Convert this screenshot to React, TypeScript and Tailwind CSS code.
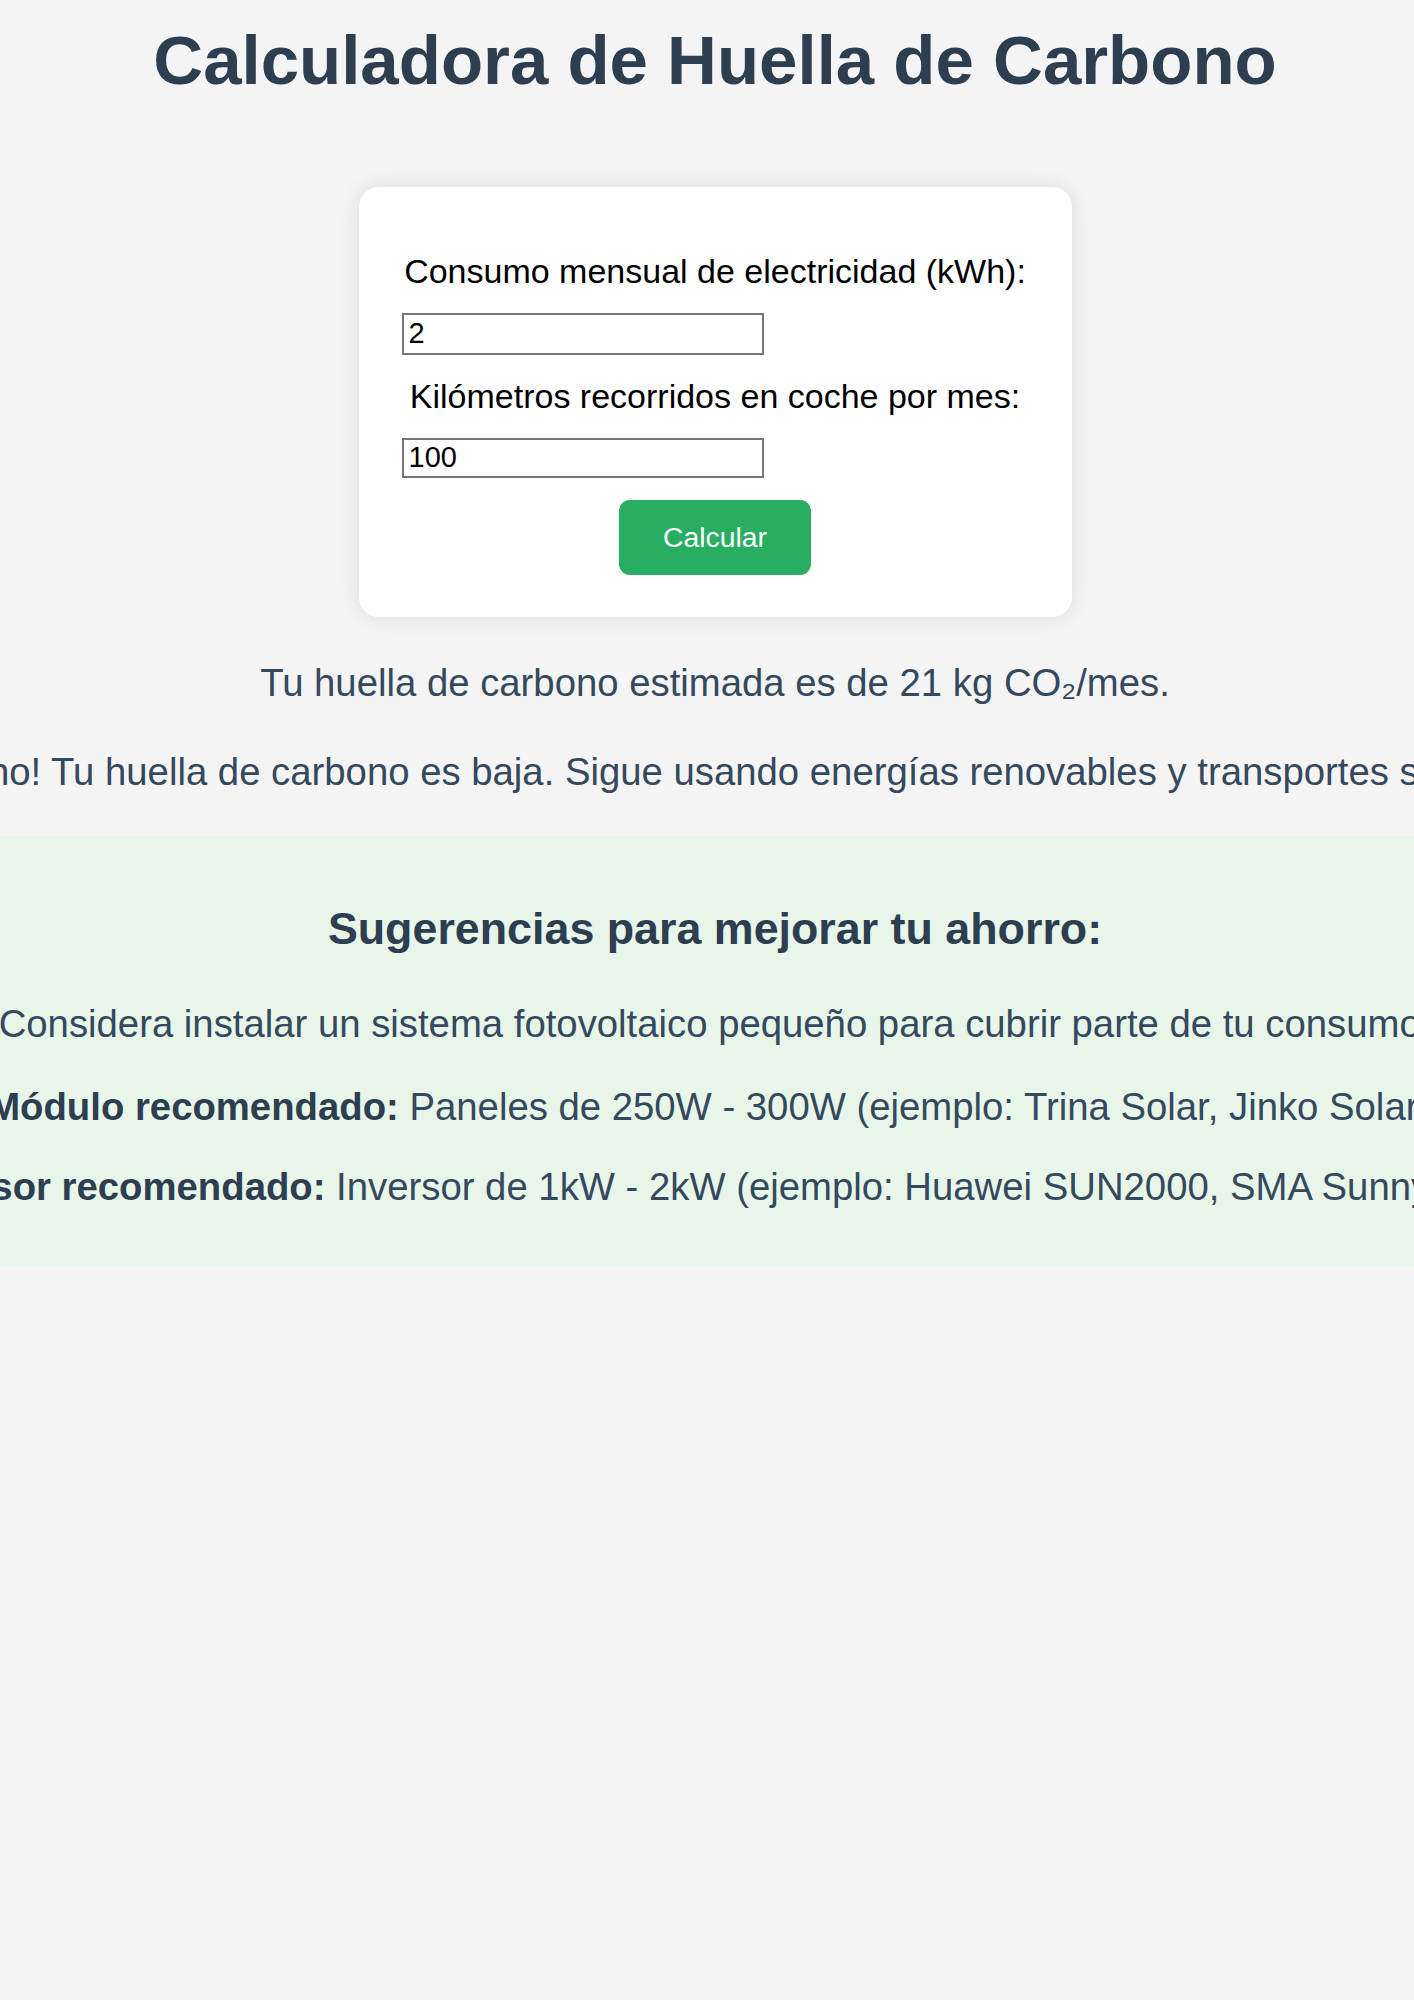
import { useState } from "react";

export default function App() {
  const [kwh, setKwh] = useState("2");
  const [km, setKm] = useState("100");

  return (
    <div className="min-h-screen overflow-hidden bg-[#f4f4f4] font-['Liberation_Sans',Arial,sans-serif]">
      {/* the page is wider than the window: centred on x=715 */}
      <div className="w-[2200px] ml-[-385px] text-center">
        <h1 className="pt-[21px] text-[69px] leading-[79px] font-bold text-[#2c3e50]">
          Calculadora de Huella de Carbono
        </h1>

        <div className="flex justify-center mt-[87px]">
          <div className="w-[713px] bg-white rounded-[20px] px-[43px] pt-[43px] pb-[42px] shadow-[0_0_21px_rgba(0,0,0,0.1)]">
            <label className="block mt-[22px] text-[34px] leading-[39px] text-black">
              Consumo mensual de electricidad (kWh):
            </label>
            <input
              value={kwh}
              onChange={(e) => setKwh(e.target.value)}
              className="block mt-[22px] w-[362px] h-[42px] bg-white border-2 border-solid border-[#767676] pl-[5px] text-[29px] text-black outline-none"
            />
            <label className="block mt-[22px] text-[34px] leading-[39px] text-black">
              Kilómetros recorridos en coche por mes:
            </label>
            <input
              value={km}
              onChange={(e) => setKm(e.target.value)}
              className="block mt-[22px] w-[362px] h-[40px] bg-white border-2 border-solid border-[#767676] pl-[5px] text-[29px] text-black outline-none"
            />
            <button className="mt-[22px] w-[192px] h-[75px] rounded-[11px] bg-[#27ae60] text-white text-[28.4px] cursor-pointer">
              Calcular
            </button>
          </div>
        </div>

        <p className="mt-[44px] text-[38.3px] leading-[44px] text-[#34495e] whitespace-nowrap">
          Tu huella de carbono estimada es de 21 kg CO₂/mes.
        </p>
        <p className="mt-[45px] text-[38.3px] leading-[44px] text-[#34495e] whitespace-nowrap">
          ¡Muy bueno! Tu huella de carbono es baja. Sigue usando energías renovables y transportes sostenibles.
        </p>

        <div className="mt-[42px] bg-[#e8f5e9] pt-[67px] pb-[58px]">
          <h3 className="text-[44.8px] leading-[51px] font-bold text-[#2c3e50]">
            Sugerencias para mejorar tu ahorro:
          </h3>
          <p className="mt-[48px] text-[38.3px] leading-[44px] text-[#34495e] whitespace-nowrap">
            Considera instalar un sistema fotovoltaico pequeño para cubrir parte de tu consumo.
          </p>
          <p className="mt-[39px] text-[38.3px] leading-[44px] text-[#34495e] whitespace-nowrap">
            <strong className="font-bold text-[#2c3e50]">Módulo recomendado:</strong> Paneles de 250W - 300W (ejemplo: Trina Solar, Jinko Solar).
          </p>
          <p className="mt-[36px] text-[38.3px] leading-[44px] text-[#34495e] whitespace-nowrap">
            <strong className="font-bold text-[#2c3e50]">Inversor recomendado:</strong> Inversor de 1kW - 2kW (ejemplo: Huawei SUN2000, SMA Sunny Boy).
          </p>
        </div>
      </div>
    </div>
  );
}
